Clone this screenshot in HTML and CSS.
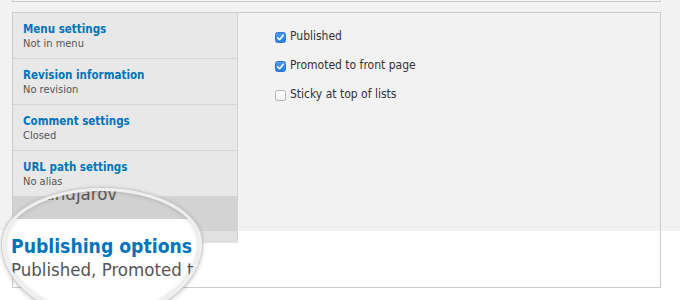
FILE: index.html
```html
<!DOCTYPE html>
<html lang="en">
<head>
    <meta charset="UTF-8">
    <title>Publishing options</title>
    <link rel="stylesheet" href="styles.css">
</head>
<body>
    <div class="page">
        <div class="top-box"></div>

        <div class="vtabs">
            <ul class="vtabs-menu">
                <li class="vtab">
                    <span class="vtab-title">Menu settings</span>
                    <span class="vtab-summary">Not in menu</span>
                </li>
                <li class="vtab">
                    <span class="vtab-title">Revision information</span>
                    <span class="vtab-summary">No revision</span>
                </li>
                <li class="vtab">
                    <span class="vtab-title">Comment settings</span>
                    <span class="vtab-summary">Closed</span>
                </li>
                <li class="vtab">
                    <span class="vtab-title">URL path settings</span>
                    <span class="vtab-summary">No alias</span>
                </li>
                <li class="vtab is-selected">
                    <span class="vtab-title">Authoring information</span>
                    <span class="vtab-summary">By Sandjarov</span>
                </li>
            </ul>

            <div class="vtabs-pane">
                <label class="check">
                    <span class="check-box is-checked">
                        <svg viewBox="0 0 11 11" width="11" height="11"><path d="M2.7 5.9 L4.6 7.8 L8.3 3.3" fill="none" stroke="#fff" stroke-width="1.5" stroke-linecap="round" stroke-linejoin="round"/></svg>
                    </span>
                    Published
                </label>
                <label class="check">
                    <span class="check-box is-checked">
                        <svg viewBox="0 0 11 11" width="11" height="11"><path d="M2.7 5.9 L4.6 7.8 L8.3 3.3" fill="none" stroke="#fff" stroke-width="1.5" stroke-linecap="round" stroke-linejoin="round"/></svg>
                    </span>
                    Promoted to front page
                </label>
                <label class="check">
                    <span class="check-box"></span>
                    Sticky at top of lists
                </label>
            </div>
        </div>
    </div>

    <!-- лупа над вкладкой -->
    <div class="lens">
        <div class="lens-name">Sandjarov</div>
        <div class="lens-title">Publishing options</div>
        <div class="lens-summary">Published, Promoted to front page</div>
    </div>
</body>
</html>
```

FILE: styles.css
```css
body {
    margin: 0;
    min-height: 300px;
    background: linear-gradient(#f2f2f2 231px, #fff 231px);
    font-family: "DejaVu Sans Condensed", "DejaVu Sans", sans-serif;
    color: #333;
    overflow: hidden;
}

.page {
    margin: 0 19px 0 12px;
}

.top-box {
    height: 1px;
    background: #f5f5f5;
    border: 1px solid #cbcbcb;
    border-top: 0;
}

.vtabs {
    margin-top: 10px;
    height: 274px;
    border: 1px solid #cbcbcb;
    display: flex;
    align-items: flex-start;
}

.vtabs-menu {
    list-style: none;
    margin: 0;
    padding: 0;
    width: 224px;
    border-right: 1px solid #d2d2d2;
}

.vtab {
    padding: 9px 0 0 10px;
    box-sizing: border-box;
    height: 46px;
    background: #e8e8e8;
    border-bottom: 1px solid #d5d5d5;
    display: flex;
    flex-direction: column;
}

.vtab.is-selected {
    border-bottom: 0;
    background: linear-gradient(#d3d3d3 34px, #e1e1e1 34px);
}

.vtab-title {
    font-weight: bold;
    font-size: 11.5px;
    line-height: 15px;
    color: #0074bd;
    white-space: nowrap;
}

.vtab-summary {
    font-size: 11px;
    line-height: 13px;
    color: #555;
}

.vtabs-pane {
    padding: 16px 0 0 37px;
    display: flex;
    flex-direction: column;
    gap: 14px;
}

.check {
    display: flex;
    align-items: flex-start;
    gap: 4px;
    font-size: 12px;
    line-height: 15px;
    color: #333;
}

.check-box {
    width: 11px;
    height: 11px;
    margin-top: 3px;
    box-sizing: border-box;
    border: 1px solid #b4b4b4;
    border-radius: 2.5px;
    background: linear-gradient(#fff, #f1f1f1);
}

.check-box svg {
    display: block;
    margin: -1px;
}

.check-box.is-checked {
    border-color: #2a76d6;
    background: linear-gradient(#4a9bf5, #2a7ee0);
}

/* Лупа */
.lens {
    position: absolute;
    left: 2px;
    top: 188px;
    width: 200px;
    height: 130px;
    box-sizing: border-box;
    border: 3px solid #efefef;
    border-radius: 100px 100px 100px 100px / 55px 55px 75px 75px;
    overflow: hidden;
    background: linear-gradient(#d1d1d1 28px, #fff 28px);
    box-shadow: 0 0 0 1px #cdcdcd, 0 1px 5px rgba(0,0,0,0.3), inset 0 0 5px rgba(0,0,0,0.2);
    white-space: nowrap;
}

.lens-name {
    margin: -7px 0 0 29px;
    font-size: 18.5px;
    line-height: 20px;
    color: #555;
}

.lens-title {
    margin: 31px 0 0 6px;
    font-size: 19.2px;
    line-height: 24px;
    font-weight: bold;
    color: #0074bd;
}

.lens-summary {
    margin-left: 6px;
    font-size: 18.5px;
    line-height: 22px;
    color: #555;
}
```
